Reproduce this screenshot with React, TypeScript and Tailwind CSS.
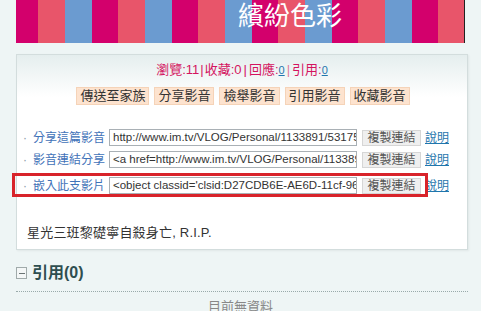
import React from 'react';

const cjk = "font-['Liberation_Sans','Noto_Sans_CJK_TC',sans-serif]";

const actions = ['傳送至家族', '分享影音', '檢舉影音', '引用影音', '收藏影音'];

const shareRows = [
  { label: '分享這篇影音', value: 'http://www.im.tv/VLOG/Personal/1133891/5317505', hot: false, gap: 'mt-[24px]' },
  { label: '影音連結分享', value: '<a href=http://www.im.tv/VLOG/Personal/1133891/5317505>', hot: false, gap: 'mt-[5px]' },
  { label: '嵌入此支影片', value: "<object classid='clsid:D27CDB6E-AE6D-11cf-96B8-444553540000'>", hot: true, gap: 'mt-[9px]' },
];

function ShareRow({ label, value, hot, gap }: { label: string; value: string; hot: boolean; gap: string }) {
  return (
    <div className={'relative flex items-center h-[17px] whitespace-nowrap ' + gap}>
      {hot && (
        <span className="absolute -left-[5px] -top-[4px] w-[416px] h-[24px] border-[3px] border-[#d8232a]" />
      )}
      <span className="ml-[6px] w-[10px] shrink-0 text-[#8a9aa8] text-[12px]">·</span>
      <span className="w-[76px] shrink-0 text-[#3f72b8] text-[12px] leading-[14px]">{label}</span>
      <div className="w-[248px] h-[17px] shrink-0 border border-[#a9b0b5] bg-white overflow-hidden px-[3px] text-[11.5px] leading-[15px] text-[#333]">
        {value}
      </div>
      <span className="ml-[5px] h-[16px] w-[59px] shrink-0 bg-[#efefef] border border-[#d6d6d6] text-center text-[12px] leading-[14px] text-[#555]">
        複製連結
      </span>
      <a className="ml-[4px] text-[12px] leading-[14px] text-[#1f76ad] underline">說明</a>
    </div>
  );
}

export default function App() {
  return (
    <div className={'w-[481px] h-[311px] overflow-hidden bg-[#eef5f5] px-4 ' + cjk}>
      {/* Banner */}
      <div className="w-[449px] h-[43px] border-r border-[#222] bg-[repeating-linear-gradient(90deg,#d3006c_0_22px,#e8556a_22px_49px,#6b9bd0_49px_76px,#d3006c_76px_80px)] pl-[222px] overflow-hidden">
        <div className="text-white text-[26px] leading-[28px] mt-[2px]">繽紛色彩</div>
      </div>

      {/* Video info box */}
      <div className="mt-[11px] w-[452px] h-[196px] border border-[#d3dddd] bg-[linear-gradient(#e5eeee,#ffffff_42px)] shadow-[1px_1px_2px_rgba(0,0,0,0.06)]">
        <div className="flex justify-center items-baseline pt-[7px] text-[13px] text-[#d4145f] leading-[16px]">
          <span>瀏覽:11</span>
          <span className="mx-[1px]">|</span>
          <span>收藏:0</span>
          <span className="mx-[2px]">|</span>
          <span>回應:</span>
          <a className="text-[11px] text-[#1f76ad] underline">0</a>
          <span className="mx-[2px] text-[#e07a9a]">|</span>
          <span>引用:</span>
          <a className="text-[11px] text-[#1f76ad] underline">0</a>
        </div>

        <div className="flex justify-center gap-[5px] mt-[9px] pl-[2px]">
          {actions.map((a) => (
            <span
              key={a}
              className="h-[18px] px-[3px] bg-[#fde3cf] border border-[#f5d3b8] text-[13px] leading-[16px] text-[#333]"
            >
              {a}
            </span>
          ))}
        </div>

        {shareRows.map((r) => (
          <ShareRow key={r.label} {...r} />
        ))}

        <div className="mt-[31px] ml-[10px] text-[13px] leading-[16px] text-[#333] tracking-[0.2px]">
          星光三班黎礎寧自殺身亡, R.I.P.
        </div>
      </div>

      {/* Trackback */}
      <div className="mt-[14px] flex items-center gap-[5px]">
        <span className="w-[11px] h-[12px] border border-[#a0aaaa] bg-[#f4f7f7] flex items-center justify-center">
          <span className="w-[6px] h-px bg-[#6a7474]" />
        </span>
        <span className="text-[16px] font-bold text-[#2e4e50] leading-[18px]">引用(0)</span>
      </div>
      <div className="mt-[9px] w-[452px] border-t border-dotted border-[#9aa]" />
      <div className="text-center text-[13px] text-[#888] mt-[5px]">目前無資料</div>
    </div>
  );
}
